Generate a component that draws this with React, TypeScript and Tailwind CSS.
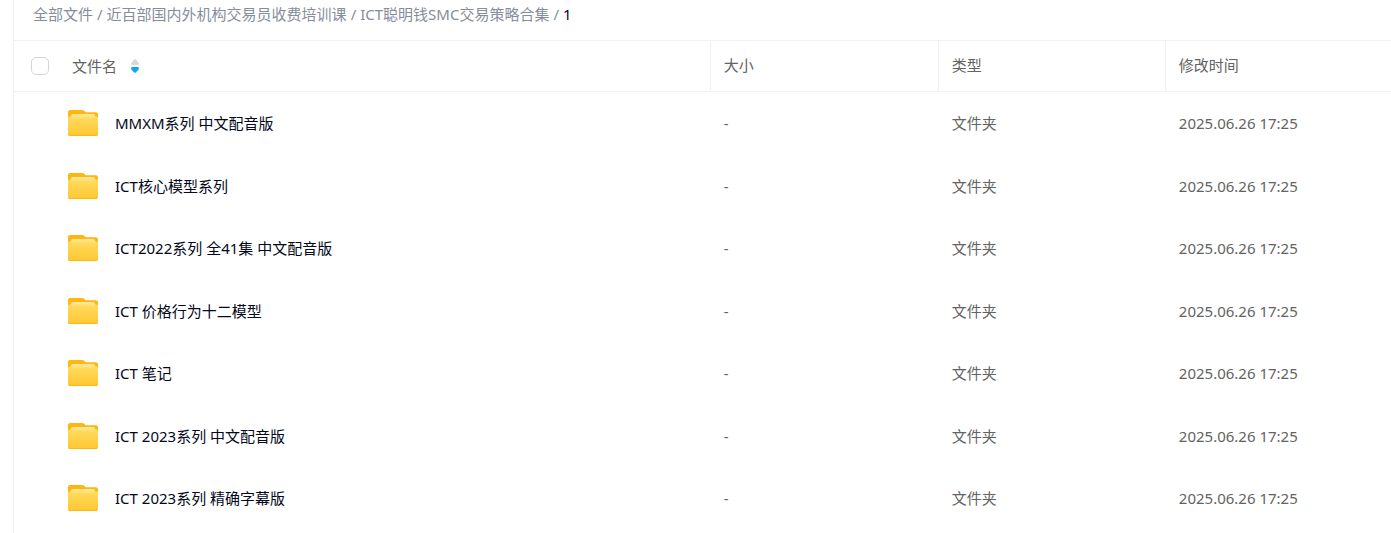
import { useState } from "react";

interface FileRow {
  name: string;
  size: string;
  type: string;
  modified: string;
}

const PARENTS = ["全部文件", "近百部国内外机构交易员收费培训课", "ICT聪明钱SMC交易策略合集"];

const NAMES = [
  "MMXM系列 中文配音版",
  "ICT核心模型系列",
  "ICT2022系列 全41集 中文配音版",
  "ICT 价格行为十二模型",
  "ICT 笔记",
  "ICT 2023系列 中文配音版",
  "ICT 2023系列 精确字幕版",
];

const ROWS: FileRow[] = NAMES.map((name) => ({
  name,
  size: "-",
  type: "文件夹",
  modified: "2025.06.26 17:25",
}));

function FolderIcon() {
  return (
    <svg width="30" height="27" viewBox="0 0 30 27" className="shrink-0" aria-hidden="true">
      <defs>
        <linearGradient id="folder-front" x1="0" y1="0" x2="0" y2="1">
          <stop offset="0" stopColor="#ffdc60" />
          <stop offset="1" stopColor="#ffc730" />
        </linearGradient>
        <linearGradient id="folder-sheet" x1="0" y1="0" x2="0" y2="1">
          <stop offset="0" stopColor="#ffe8a3" />
          <stop offset="1" stopColor="#ffdc60" />
        </linearGradient>
      </defs>
      <path
        d="M0 2.2C0 .9.9 0 2.2 0h12c.8 0 1.400.3 2 .8l.9.9c.4.4.9.5 1.500.5h9.200C29.100 2.200 30 3.100 30 4.400V22H0z"
        fill="#ffb60f"
      />
      <path
        d="M0 8.400C0 7.100.9 6.200 2.200 6.200h25.600C29.100 6.200 30 7.100 30 8.400v15c0 1.600-1 2.700-2.600 2.700H2.600C1 26.100 0 25 0 23.400z"
        fill="url(#folder-front)"
      />
      <path d="M3 5.800C3 4.700 3.800 4 4.900 4h20.200c1.100 0 1.900.7 1.900 1.800V8.500H3z" fill="url(#folder-sheet)" />
      <path
        d="M0 22.900v.5c0 1.600 1 2.700 2.600 2.700h24.800c1.600 0 2.600-1.100 2.600-2.700v-.5c-.2 1.300-1.200 2.200-2.600 2.200H2.600C1.200 25.100.2 24.200 0 22.900z"
        fill="#fdb813"
      />
    </svg>
  );
}

function SortIcon() {
  return (
    <svg width="8" height="14" viewBox="0 0 8 14" aria-hidden="true">
      <path d="M3.200.6a1.100 1.100 0 0 1 1.600 0L7.400 3.400C8.200 4.400 8 6 6.800 6H1.200C0 6-.2 4.400.6 3.400z" fill="#d4d7de" />
      <path d="M3.200 13.400a1.100 1.100 0 0 0 1.600 0L7.400 10.800C8.200 9.800 8 8 6.800 8H1.200C0 8-.2 9.800.6 10.800z" fill="#06a7ff" />
    </svg>
  );
}

function Breadcrumb() {
  return (
    <nav aria-label="路径" className="h-10 pl-[19px] pt-1">
      <ol className="flex text-[#878c9c]">
        {PARENTS.map((label) => (
          <li key={label} className="whitespace-nowrap">
            <a href="#">{label}</a>
            <span className="px-1">/</span>
          </li>
        ))}
        <li aria-current="page" className="text-[#03081a]">
          1
        </li>
      </ol>
    </nav>
  );
}

const headCell = "h-[52px] border-y border-[#f1f1f1] p-0 text-left font-normal text-[#636363]";
const bodyCell = "pt-0 pb-px pl-[13px]";

export default function App() {
  const [checked, setChecked] = useState(false);

  return (
    <div className="min-h-screen bg-white pl-[13px] font-['Noto_Sans','Noto_Sans_CJK_SC',sans-serif] text-[15px] leading-5">
      <main className="min-h-screen border-l border-[#f1f1f1]">
        <Breadcrumb />
        <table className="w-full table-fixed border-separate border-spacing-0">
          <thead>
            <tr>
              <th className={`${headCell} w-[50.6%] border-r`}>
                <div className="flex items-center pl-[17px]">
                  <input
                    type="checkbox"
                    aria-label="全选"
                    checked={checked}
                    onChange={(e) => setChecked(e.target.checked)}
                    className="size-[18px] appearance-none rounded-[5px] border border-[#d6d6d6] bg-white checked:border-[#06a7ff] checked:bg-[#06a7ff]"
                  />
                  <button type="button" className="ml-[23px] flex items-center gap-[14px]">
                    文件名
                    <SortIcon />
                  </button>
                </div>
              </th>
              <th className={`${headCell} w-[16.55%] border-r`}>
                <div className="pb-0.5 pl-[13px]">大小</div>
              </th>
              <th className={`${headCell} w-[16.5%] border-r`}>
                <div className="pb-0.5 pl-[13px]">类型</div>
              </th>
              <th className={headCell}>
                <div className="pb-0.5 pl-[13px]">修改时间</div>
              </th>
            </tr>
          </thead>
          <tbody className="text-[#636363]">
            {ROWS.map((row) => (
              <tr key={row.name} className="odd:h-[63px] even:h-[62px]">
                <td className="p-0">
                  <a href="#" className="flex items-center gap-[17px] pl-[54px] text-[#03081a]">
                    <FolderIcon />
                    <span className="truncate pb-px">{row.name}</span>
                  </a>
                </td>
                <td className={bodyCell}>{row.size}</td>
                <td className={bodyCell}>{row.type}</td>
                <td className={bodyCell}>{row.modified}</td>
              </tr>
            ))}
          </tbody>
        </table>
      </main>
    </div>
  );
}
